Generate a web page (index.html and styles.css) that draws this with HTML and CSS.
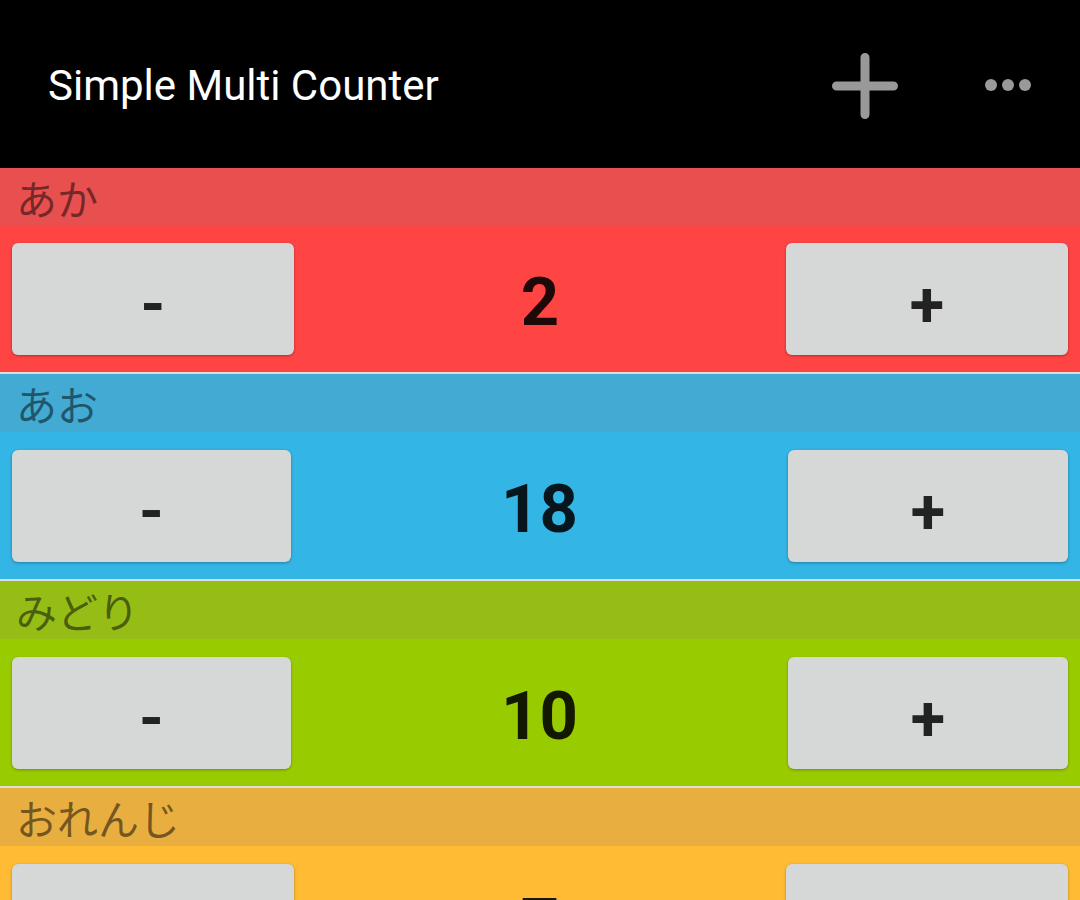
FILE: index.html
```html
<!DOCTYPE html>
<html lang="ja">
<head>
<meta charset="utf-8">
<title>Simple Multi Counter</title>
<link rel="stylesheet" href="styles.css">
</head>
<body>
<div class="app">
  <header class="appbar">
    <div class="appbar-title">Simple Multi Counter</div>
    <div class="appbar-actions">
      <button class="icon-btn add" aria-label="add">
        <svg width="66" height="66" viewBox="0 0 66 66"><path d="M33 4.5V61.5M4.5 33H61.5" stroke="#999" stroke-width="9" stroke-linecap="round" fill="none"/></svg>
      </button>
      <button class="icon-btn more" aria-label="more">
        <svg width="48" height="14" viewBox="0 0 48 14"><circle cx="7" cy="7" r="6" fill="#999"/><circle cx="24" cy="7" r="6" fill="#999"/><circle cx="41" cy="7" r="6" fill="#999"/></svg>
      </button>
    </div>
  </header>

  <section class="counter red">
    <div class="counter-label">あか</div>
    <div class="counter-row wide first">
      <button class="cbtn minus">-</button>
      <div class="count">2</div>
      <button class="cbtn plus">+</button>
    </div>
  </section>

  <section class="counter blue">
    <div class="counter-label">あお</div>
    <div class="counter-row">
      <button class="cbtn minus">-</button>
      <div class="count">18</div>
      <button class="cbtn plus">+</button>
    </div>
  </section>

  <section class="counter green">
    <div class="counter-label">みどり</div>
    <div class="counter-row">
      <button class="cbtn minus">-</button>
      <div class="count">10</div>
      <button class="cbtn plus">+</button>
    </div>
  </section>

  <section class="counter orange">
    <div class="counter-label">おれんじ</div>
    <div class="counter-row wide">
      <button class="cbtn minus">-</button>
      <div class="count">7</div>
      <button class="cbtn plus">+</button>
    </div>
  </section>
</div>
</body>
</html>
```

FILE: styles.css
```css
html, body {
  margin: 0;
  padding: 0;
  background: #ffbb33;
  overflow: hidden;
}

body {
  width: 1080px;
  height: 900px;
  font-family: Roboto, "Noto Sans CJK JP", sans-serif;
}

.app {
  display: flex;
  flex-direction: column;
}

.appbar {
  height: 168px;
  background: #000;
  display: flex;
  align-items: center;
  justify-content: space-between;
  padding: 0 0 0 48px;
  box-sizing: border-box;
}

.appbar-title {
  color: #fff;
  font-size: 42px;
  font-family: Roboto, sans-serif;
  padding-top: 2px;
}

.appbar-actions {
  display: flex;
  align-items: center;
  gap: 86px;
  padding-right: 48px;
}

.icon-btn {
  background: none;
  border: 0;
  padding: 0;
  margin: 0;
  display: flex;
  align-items: center;
  justify-content: center;
}

.icon-btn.add {
  margin-top: 4px;
}

.icon-btn.more {
  margin-top: 2px;
}

.counter {
  display: flex;
  flex-direction: column;
  border-bottom: 2px solid #dcdcdc;
}

.counter:last-child {
  border-bottom: 0;
}

.counter-label {
  height: 58px;
  display: flex;
  align-items: center;
  padding-left: 16px;
  font-family: "Noto Sans CJK JP", sans-serif;
  font-size: 41px;
  color: rgba(0, 0, 0, 0.5);
}

.counter-row {
  height: 147px;
  box-sizing: border-box;
  padding: 18px 12px 17px;
  display: flex;
  align-items: stretch;
}

.counter-row.first {
  height: 146px;
  padding-top: 17px;
}

.cbtn {
  width: 280px;
  flex: none;
  border: 0;
  margin: 0;
  background: #d6d7d7;
  border-radius: 6px;
  box-shadow: 0 1px 3px rgba(0, 0, 0, 0.3);
  font-family: Roboto, sans-serif;
  font-weight: 700;
  font-size: 63px;
  color: #222;
  padding: 10px 0 0;
  display: flex;
  align-items: center;
  justify-content: center;
}

.cbtn.minus {
  width: 279px;
}

.counter-row.wide .cbtn {
  width: 282px;
}

.count {
  flex: 1;
  display: flex;
  align-items: center;
  justify-content: center;
  font-family: Roboto, sans-serif;
  font-weight: 700;
  font-size: 67px;
  color: rgba(0, 0, 0, 0.88);
  padding-top: 6px;
}

.red { background: #ff4444; }
.red .counter-label { background: #e85050; }

.blue { background: #33b5e5; }
.blue .counter-label { background: #42aad3; }

.green { background: #99cc00; }
.green .counter-label { background: #95bd16; }

.orange { background: #ffbb33; }
.orange .counter-label { background: #e9ae40; }
```
